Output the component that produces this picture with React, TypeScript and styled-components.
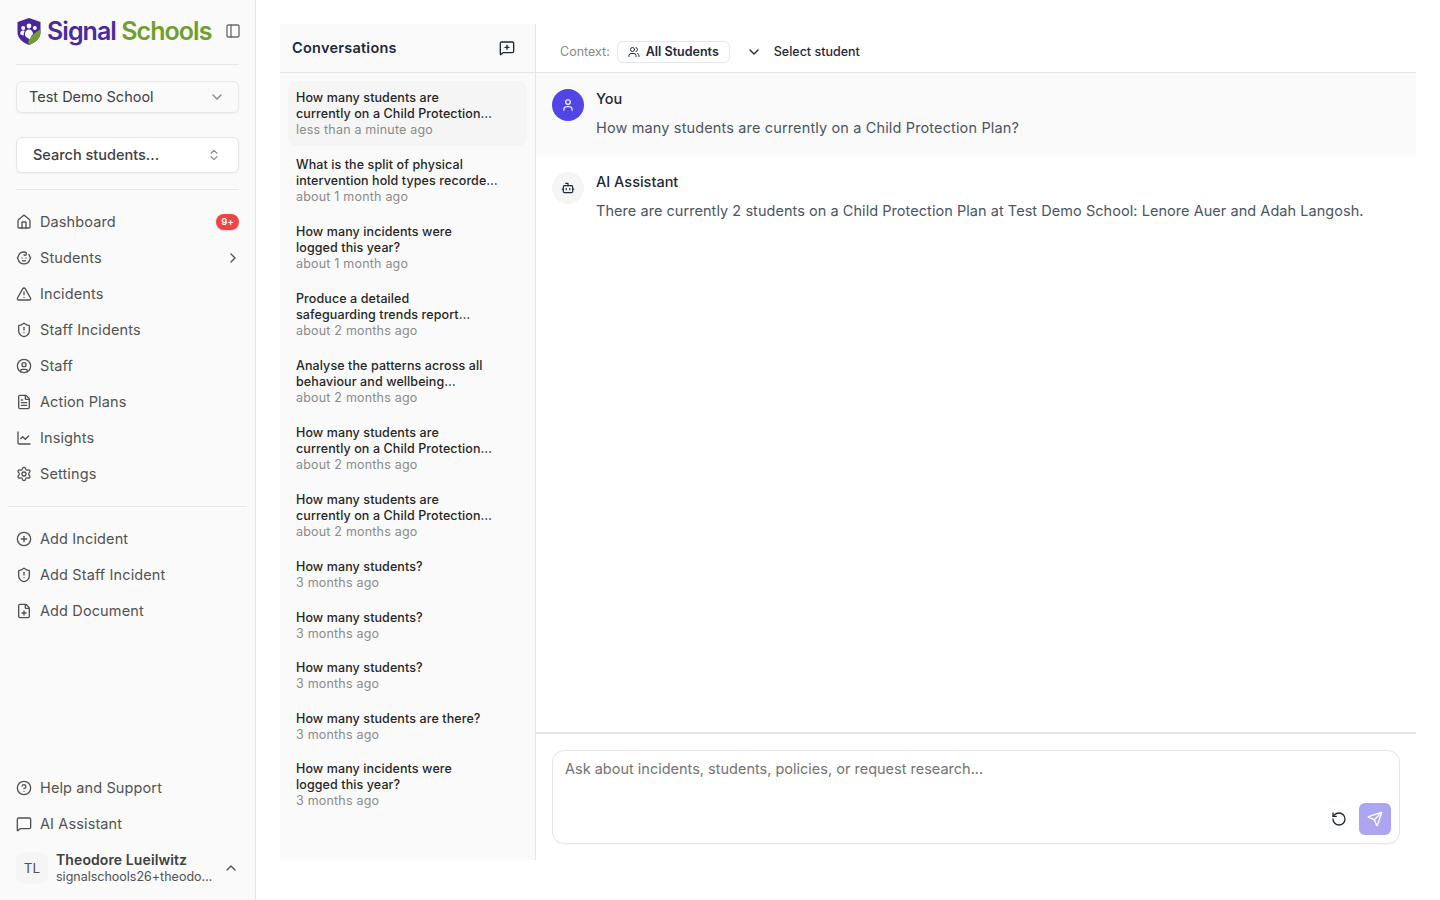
import React from 'react';
import styled, { createGlobalStyle } from 'styled-components';
import {
  ChevronDown,
  ChevronRight,
  ChevronUp,
  ChevronsUpDown,
  Bot,
  CircleHelp,
  CirclePlus,
  CircleUser,
  Baby,
  FilePlus,
  FileText,
  House,
  LineChart,
  MessageSquare,
  MessageSquarePlus,
  PanelLeft,
  RotateCcw,
  Send,
  Settings,
  ShieldAlert,
  TriangleAlert,
  User,
  Users,
} from 'lucide-react';

const GlobalStyle = createGlobalStyle`
  * { box-sizing: border-box; }
  html, body { margin: 0; height: 100%; background: #fff; }
  body { font-family: Inter, "Liberation Sans", sans-serif; color: #111827; overflow: hidden; }
`;

const Page = styled.div`
  display: flex;
  width: 1440px;
  height: 900px;
`;

const Sidebar = styled.aside`
  width: 256px;
  height: 900px;
  flex-shrink: 0;
  display: flex;
  flex-direction: column;
  background: #fafafa;
  border-right: 1px solid #e5e5e5;
  padding: 0 8px;
`;

const LogoRow = styled.div`
  height: 64px;
  display: flex;
  align-items: center;
  padding: 0 6px 2px 8px;
`;

const LogoText = styled.div`
  margin-left: 5px;
  font-size: 25px;
  font-weight: 600;
  letter-spacing: -0.95px;
  white-space: nowrap;
  color: #4b2a9e;
  flex: 1;
`;

const LogoGreen = styled.span`
  color: #6f9f2c;
`;

const Rule = styled.div<{ $full?: boolean }>`
  height: 1px;
  background: #e5e7eb;
  margin: ${p => (p.$full ? '0' : '0 8px')};
`;

const SelectBox = styled.div<{ $white?: boolean }>`
  display: flex;
  align-items: center;
  justify-content: space-between;
  margin: ${p => (p.$white ? '0 8px 16px' : '16px 8px 24px')};
  height: ${p => (p.$white ? '36px' : '32px')};
  padding: ${p => (p.$white ? '0 17px 0 16px' : '0 13px 0 12px')};
  background: ${p => (p.$white ? '#fff' : '#fafafa')};
  border: 1px solid #e5e7eb;
  border-radius: 6px;
  box-shadow: 0 1px 2px rgba(0, 0, 0, 0.05);
  font-size: 14.5px;
  color: #404040;
  font-weight: ${p => (p.$white ? 500 : 400)};
  svg { color: #8a8a8a; }
`;

const SelectLabel = styled.span`
  margin-bottom: 2px;
`;

const NavGroup = styled.nav`
  display: flex;
  flex-direction: column;
  padding: 14px 0;
`;

const NavRow = styled.div`
  height: 36px;
  display: flex;
  align-items: center;
  gap: 8px;
  padding: 0 8px;
  font-size: 14.5px;
  letter-spacing: 0.12px;
  color: #525252;
  svg { flex-shrink: 0; }
`;

const NavLabel = styled.span`
  flex: 1;
  margin-bottom: 2px;
`;

const NavChevron = styled(ChevronRight)`
  margin-right: -2px;
`;

const Badge = styled.span`
  background: #ef4444;
  color: #fff;
  font-size: 9.5px;
  font-weight: 600;
  padding: 0 5px;
  height: 16px;
  line-height: 16px;
  border-radius: 8px;
  box-shadow: 0 1px 2px rgba(0, 0, 0, 0.15);
`;

const Spacer = styled.div`
  flex: 1;
`;

const FooterGroup = styled.div`
  display: flex;
  flex-direction: column;
`;

const UserRow = styled.div`
  height: 48px;
  margin: 2px 0 8px;
  display: flex;
  align-items: center;
  padding: 0 8px;
  gap: 8px;
`;

const Avatar = styled.div`
  width: 32px;
  height: 32px;
  border-radius: 8px;
  background: #f5f5f5;
  display: flex;
  align-items: center;
  justify-content: center;
  font-size: 13.5px;
  color: #525252;
  flex-shrink: 0;
`;

const UserText = styled.div`
  flex: 1;
  min-width: 0;
  line-height: 17px;
`;

const UserName = styled.div`
  font-size: 14px;
  font-weight: 600;
  letter-spacing: 0.1px;
  color: #404040;
`;

const UserMail = styled.div`
  font-size: 12.5px;
  color: #525252;
  white-space: nowrap;
`;

const Main = styled.main`
  flex: 1;
  min-width: 0;
  padding: 24px 24px 40px;
  display: flex;
`;

const ConversationPanel = styled.section`
  width: 256px;
  flex-shrink: 0;
  background: #fafafa;
  border-right: 1px solid #e5e5e5;
  display: flex;
  flex-direction: column;
`;

const ConversationHeader = styled.div`
  height: 49px;
  padding: 0 20px 0 12px;
  display: flex;
  align-items: center;
  justify-content: space-between;
  border-bottom: 1px solid #e5e5e5;
  font-size: 14.5px;
  font-weight: 600;
  letter-spacing: 0.25px;
  color: #1f2937;
  svg { color: #1f2937; }
`;

const ConversationHeaderText = styled.span`
  margin-bottom: 2px;
`;

const ConversationList = styled.div`
  padding: 8px;
  display: flex;
  flex-direction: column;
  gap: 2px;
`;

const ConversationTitle = styled.div`
  font-size: 12.5px;
  line-height: 16px;
  font-weight: 500;
  letter-spacing: 0.1px;
  color: #262626;
`;

const ConversationTime = styled.div`
  font-size: 12.5px;
  line-height: 16px;
  letter-spacing: 0.2px;
  color: #8a8a8a;
`;

const ConversationItem = styled.div<{ $active?: boolean }>`
  padding: 9.4px 8px 7.1px;
  border-radius: 8px;
  background: ${p => (p.$active ? '#f5f5f5' : 'transparent')};

  /* two-line titles sit half a pixel taller */
  ${ConversationTitle} + ${ConversationTitle} + ${ConversationTime} {
    padding-bottom: 0.5px;
  }
`;

const ChatPanel = styled.section`
  flex: 1;
  min-width: 0;
  display: flex;
  flex-direction: column;
`;

const ContextBar = styled.div`
  height: 49px;
  flex-shrink: 0;
  display: flex;
  align-items: center;
  padding: 7px 24px 0 24px;
  border-bottom: 1px solid #e5e5e5;
  font-size: 12.5px;
`;

const ContextLabel = styled.span`
  color: #8a8a8a;
  margin-right: 7px;
`;

const ContextChip = styled.div`
  display: flex;
  align-items: center;
  gap: 6px;
  height: 22px;
  padding: 0 10px;
  border: 1px solid #e5e7eb;
  border-radius: 6px;
  font-weight: 600;
  color: #1f2937;
`;

const StudentSelect = styled.div`
  display: flex;
  align-items: center;
  gap: 12px;
  margin-left: 16px;
  font-weight: 500;
  color: #1f2937;
`;

const Messages = styled.div`
  flex: 1;
`;

const Message = styled.div<{ $tinted?: boolean }>`
  display: flex;
  gap: 12px;
  padding: 16px;
  height: 83px;
  background: ${p => (p.$tinted ? '#fafafa' : '#fff')};
`;

const MessageAvatar = styled.div<{ $user?: boolean }>`
  width: 32px;
  height: 32px;
  border-radius: 50%;
  display: flex;
  align-items: center;
  justify-content: center;
  flex-shrink: 0;
  background: ${p => (p.$user ? '#4f46e5' : '#f5f5f5')};
  color: ${p => (p.$user ? '#fff' : '#1f2937')};
`;

const MessageAuthor = styled.div`
  font-size: 14.5px;
  font-weight: 500;
  line-height: 20px;
  color: #1f2937;
  margin-bottom: 9px;
`;

const MessageBody = styled.div<{ $spacing: number }>`
  font-size: 14.5px;
  line-height: 20px;
  letter-spacing: ${p => p.$spacing}px;
  color: #4b5563;
  white-space: nowrap;
`;

const Composer = styled.div`
  height: 128px;
  flex-shrink: 0;
  padding: 16px;
  border-top: 2px solid #e5e5e5;
`;

const InputBox = styled.div`
  position: relative;
  height: 94px;
  border: 1px solid #e5e5e5;
  border-radius: 12px;
  padding: 8px 12px;
  font-size: 14.5px;
  line-height: 20px;
  color: #737373;
  box-shadow: 0 1px 2px rgba(0, 0, 0, 0.04);
`;

const ComposerActions = styled.div`
  position: absolute;
  right: 8px;
  bottom: 8px;
  display: flex;
  align-items: center;
  gap: 12px;
  color: #1f2937;
`;

const SendButton = styled.div`
  width: 32px;
  height: 32px;
  border-radius: 6px;
  background: #aba5f2;
  color: #fff;
  display: flex;
  align-items: center;
  justify-content: center;
`;

const ShieldLogo = () => (
  <svg width="26" height="29" viewBox="0 0 26 29">
    <path d="M13 1 L24.5 5 V15 C24.5 21.5 19.5 25.5 13 28 C6.5 25.5 1.5 21.5 1.5 15 V5 Z" fill="#47279b" />
    <path d="M24.5 12 V15 C24.5 21.5 19.5 25.5 13 28 C12 26.5 12 24 13.5 21.5 C16 18 20.5 15 24.5 12 Z" fill="#6f9f2c" />
    <circle cx="13" cy="9" r="2.4" fill="#fff" />
    <circle cx="7.2" cy="11" r="2" fill="#fff" />
    <circle cx="18.8" cy="11" r="2" fill="#fff" />
    <path d="M9 18 C9 14 11 12.5 13 12.5 C15 12.5 17 14 17 17 C15.5 18.5 14.5 20 14 22 C11.5 21.5 9.5 20 9 18 Z" fill="#fff" />
    <path d="M4.2 17 C4.2 14.5 5.5 13.5 7.2 13.5 C7.8 13.5 8.3 13.6 8.7 13.9 C8 15 7.6 16.5 7.7 18.4 C6.3 18.2 5 17.8 4.2 17 Z" fill="#fff" />
  </svg>
);

const mainNav = [
  { label: 'Dashboard', icon: House, badge: '9+' },
  { label: 'Students', icon: Baby, chevron: true },
  { label: 'Incidents', icon: TriangleAlert },
  { label: 'Staff Incidents', icon: ShieldAlert },
  { label: 'Staff', icon: CircleUser },
  { label: 'Action Plans', icon: FileText },
  { label: 'Insights', icon: LineChart },
  { label: 'Settings', icon: Settings },
];

const quickNav = [
  { label: 'Add Incident', icon: CirclePlus },
  { label: 'Add Staff Incident', icon: ShieldAlert },
  { label: 'Add Document', icon: FilePlus },
];

const footerNav = [
  { label: 'Help and Support', icon: CircleHelp },
  { label: 'AI Assistant', icon: MessageSquare },
];

const conversations = [
  { title: ['How many students are', 'currently on a Child Protection…'], time: 'less than a minute ago', active: true },
  { title: ['What is the split of physical', 'intervention hold types recorde…'], time: 'about 1 month ago' },
  { title: ['How many incidents were', 'logged this year?'], time: 'about 1 month ago' },
  { title: ['Produce a detailed', 'safeguarding trends report…'], time: 'about 2 months ago' },
  { title: ['Analyse the patterns across all', 'behaviour and wellbeing…'], time: 'about 2 months ago' },
  { title: ['How many students are', 'currently on a Child Protection…'], time: 'about 2 months ago' },
  { title: ['How many students are', 'currently on a Child Protection…'], time: 'about 2 months ago' },
  { title: ['How many students?'], time: '3 months ago' },
  { title: ['How many students?'], time: '3 months ago' },
  { title: ['How many students?'], time: '3 months ago' },
  { title: ['How many students are there?'], time: '3 months ago' },
  { title: ['How many incidents were', 'logged this year?'], time: '3 months ago' },
];

export default function App() {
  return (
    <Page>
      <GlobalStyle />
      <Sidebar>
        <LogoRow>
          <ShieldLogo />
          <LogoText>
            Signal <LogoGreen>Schools</LogoGreen>
          </LogoText>
          <PanelLeft size={16} color="#6b6b6b" />
        </LogoRow>
        <Rule />
        <SelectBox>
          <SelectLabel>Test Demo School</SelectLabel>
          <ChevronDown size={16} />
        </SelectBox>
        <SelectBox $white>
          <SelectLabel>Search students...</SelectLabel>
          <ChevronsUpDown size={14} />
        </SelectBox>
        <Rule />
        <NavGroup>
          {mainNav.map(item => (
            <NavRow key={item.label}>
              <item.icon size={16} />
              <NavLabel>{item.label}</NavLabel>
              {item.badge && <Badge>{item.badge}</Badge>}
              {item.chevron && <NavChevron size={16} />}
            </NavRow>
          ))}
        </NavGroup>
        <Rule $full />
        <NavGroup>
          {quickNav.map(item => (
            <NavRow key={item.label}>
              <item.icon size={16} />
              <NavLabel>{item.label}</NavLabel>
            </NavRow>
          ))}
        </NavGroup>
        <Spacer />
        <FooterGroup>
          {footerNav.map(item => (
            <NavRow key={item.label}>
              <item.icon size={16} />
              <NavLabel>{item.label}</NavLabel>
            </NavRow>
          ))}
          <UserRow>
            <Avatar>TL</Avatar>
            <UserText>
              <UserName>Theodore Lueilwitz</UserName>
              <UserMail>signalschools26+theodo…</UserMail>
            </UserText>
            <ChevronUp size={16} color="#525252" />
          </UserRow>
        </FooterGroup>
      </Sidebar>
      <Main>
        <ConversationPanel>
          <ConversationHeader>
            <ConversationHeaderText>Conversations</ConversationHeaderText>
            <MessageSquarePlus size={16} />
          </ConversationHeader>
          <ConversationList>
            {conversations.map((c, i) => (
              <ConversationItem key={i} $active={c.active}>
                {c.title.map(line => (
                  <ConversationTitle key={line}>{line}</ConversationTitle>
                ))}
                <ConversationTime>{c.time}</ConversationTime>
              </ConversationItem>
            ))}
          </ConversationList>
        </ConversationPanel>
        <ChatPanel>
          <ContextBar>
            <ContextLabel>Context:</ContextLabel>
            <ContextChip>
              <Users size={12} />
              All Students
            </ContextChip>
            <StudentSelect>
              <ChevronDown size={16} />
              Select student
            </StudentSelect>
          </ContextBar>
          <Messages>
            <Message $tinted>
              <MessageAvatar $user>
                <User size={14} />
              </MessageAvatar>
              <div>
                <MessageAuthor>You</MessageAuthor>
                <MessageBody $spacing={0.14}>How many students are currently on a Child Protection Plan?</MessageBody>
              </div>
            </Message>
            <Message>
              <MessageAvatar>
                <Bot size={14} />
              </MessageAvatar>
              <div>
                <MessageAuthor>AI Assistant</MessageAuthor>
                <MessageBody $spacing={0.05}>
                  There are currently 2 students on a Child Protection Plan at Test Demo School: Lenore Auer and Adah Langosh.
                </MessageBody>
              </div>
            </Message>
          </Messages>
          <Composer>
            <InputBox>
              Ask about incidents, students, policies, or request research...
              <ComposerActions>
                <RotateCcw size={16} />
                <SendButton>
                  <Send size={16} />
                </SendButton>
              </ComposerActions>
            </InputBox>
          </Composer>
        </ChatPanel>
      </Main>
    </Page>
  );
}
